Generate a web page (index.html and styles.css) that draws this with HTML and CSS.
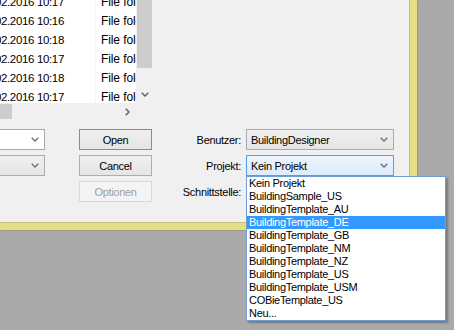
FILE: index.html
```html
<!DOCTYPE html>
<html lang="de">
<head>
    <meta charset="UTF-8">
    <title>Projekt öffnen</title>
    <link rel="stylesheet" href="styles.css">
</head>
<body>
    <div class="frame">
        <div class="dialog">
            <!-- file browser, cut off at the left/top edge -->
            <div class="browser">
                <div class="files">
                    <div class="rows">
                        <div class="row"><span class="date">03.02.2016 10:17</span><span class="type">File folder</span></div>
                        <div class="row"><span class="date">03.02.2016 10:16</span><span class="type">File folder</span></div>
                        <div class="row"><span class="date">03.02.2016 10:18</span><span class="type">File folder</span></div>
                        <div class="row"><span class="date">03.02.2016 10:17</span><span class="type">File folder</span></div>
                        <div class="row"><span class="date">03.02.2016 10:18</span><span class="type">File folder</span></div>
                        <div class="row"><span class="date">03.02.2016 10:17</span><span class="type">File folder</span></div>
                    </div>
                    <div class="vscroll">
                        <div class="vthumb"></div>
                        <div class="arrow-box">
                            <svg width="8" height="5" viewBox="0 0 8 5"><polyline points="0.7,0.7 4,4 7.3,0.7" fill="none" stroke="#606060" stroke-width="1.4"/></svg>
                        </div>
                    </div>
                </div>
                <div class="hscroll">
                    <div class="hthumb"></div>
                    <div class="arrow-box">
                        <svg width="5" height="8" viewBox="0 0 5 8"><polyline points="0.7,0.7 4,4 0.7,7.3" fill="none" stroke="#606060" stroke-width="1.4"/></svg>
                    </div>
                    <div class="corner"></div>
                </div>
            </div>

            <div class="controls">
                <div class="combo white left-combo">
                    <span class="value"></span>
                    <svg class="chev" width="8" height="5" viewBox="0 0 8 5"><polyline points="0.7,0.7 4,4 7.3,0.7" fill="none" stroke="#707070" stroke-width="1.4"/></svg>
                </div>
                <button class="btn default">Open</button>
                <span class="label">Benutzer:</span>
                <div class="combo">
                    <span class="value">BuildingDesigner</span>
                    <svg class="chev" width="8" height="5" viewBox="0 0 8 5"><polyline points="0.7,0.7 4,4 7.3,0.7" fill="none" stroke="#707070" stroke-width="1.4"/></svg>
                </div>

                <div class="combo left-combo">
                    <span class="value"></span>
                    <svg class="chev" width="8" height="5" viewBox="0 0 8 5"><polyline points="0.7,0.7 4,4 7.3,0.7" fill="none" stroke="#707070" stroke-width="1.4"/></svg>
                </div>
                <button class="btn">Cancel</button>
                <span class="label">Projekt:</span>
                <div class="combo open">
                    <span class="value">Kein Projekt</span>
                    <svg class="chev" width="8" height="5" viewBox="0 0 8 5"><polyline points="0.7,0.7 4,4 7.3,0.7" fill="none" stroke="#707070" stroke-width="1.4"/></svg>
                    <ul class="dropdown">
                        <li>Kein Projekt</li>
                        <li>BuildingSample_US</li>
                        <li>BuildingTemplate_AU</li>
                        <li class="selected">BuildingTemplate_DE</li>
                        <li>BuildingTemplate_GB</li>
                        <li>BuildingTemplate_NM</li>
                        <li>BuildingTemplate_NZ</li>
                        <li>BuildingTemplate_US</li>
                        <li>BuildingTemplate_USM</li>
                        <li>COBieTemplate_US</li>
                        <li>Neu...</li>
                    </ul>
                </div>

                <span></span>
                <button class="btn" disabled>Optionen</button>
                <span class="label">Schnittstelle:</span>
                <div class="combo"></div>
            </div>
        </div>
    </div>
</body>
</html>
```

FILE: styles.css
```css
body {
    margin: 0;
    width: 454px;
    height: 330px;
    overflow: hidden;
    background-color: #aaaaaa;
    font-family: 'Liberation Sans', Arial, sans-serif;
    font-size: 11px;
    letter-spacing: -0.3px;
    color: #000;
}

.frame {
    width: 410px;
    height: 223px;
    border-right: 7px solid #e3e083;
    border-bottom: 7px solid #e3e083;
    box-shadow: 1px 1px 0 #9c9b88;
}

.dialog {
    height: 222px;
    width: 409px;
    background-color: #f0f0f0;
    border-right: 1px solid #c4c078;
    border-bottom: 1px solid #c4c078;
}

/* file list */
.browser {
    width: 153px;
}

.files {
    display: flex;
    height: 103px;
    background-color: #fff;
}

.rows {
    width: 136px;
    flex-shrink: 0;
    overflow: hidden;
    font-size: 11.5px;
    letter-spacing: -0.35px;
}

.row {
    display: flex;
    height: 19px;
    line-height: 19px;
    white-space: nowrap;
}

.row:first-child {
    margin-top: -7px;
}

.date {
    flex-shrink: 0;
    width: 95px;
    overflow: hidden;
    text-indent: -20px;
    border-right: 1px solid #f4f7fb;
}

.type {
    flex-shrink: 0;
    padding-left: 5px;
    font-size: 12px;
    letter-spacing: -0.1px;
}

.vscroll {
    width: 17px;
    display: flex;
    flex-direction: column;
    background-color: #f0f0f0;
}

.vthumb {
    height: 68px;
    margin: 0 1px;
    background-color: #cdcdcd;
}

.arrow-box {
    width: 17px;
    height: 17px;
    display: flex;
    align-items: center;
    justify-content: center;
    margin-top: auto;
}

.hscroll {
    display: flex;
    height: 17px;
    background-color: #f0f0f0;
}

.hthumb {
    width: 12px;
    margin: 1px 0;
    background-color: #cdcdcd;
}

.hscroll .arrow-box {
    margin-left: auto;
}

.corner {
    width: 17px;
}

/* lower part */
.controls {
    display: grid;
    grid-template-columns: 79px 73px 94px 148px;
    grid-template-rows: 21px 21px 21px;
    row-gap: 5px;
    margin-top: 9px;
}

.combo {
    position: relative;
    display: flex;
    align-items: center;
    box-sizing: border-box;
    height: 21px;
    padding: 0 0 0 4px;
    border: 1px solid #acacac;
    background: linear-gradient(#f0f0f0, #e5e5e5);
}

.combo.white {
    background: #fff;
    border-color: #a9a9a9;
}

.combo.open {
    border-color: #569de5;
    background: linear-gradient(#ecf4fc, #dcecfc);
}

.left-combo {
    width: 65px;
    margin-left: -20px;
}

.value {
    flex: 1;
    white-space: nowrap;
}

.chev {
    margin-right: 5px;
}

.btn {
    height: 21px;
    padding: 0;
    font-family: inherit;
    font-size: 11px;
    letter-spacing: -0.3px;
    color: #000;
    border: 1px solid #adadad;
    background: linear-gradient(#f0f0f0, #e5e5e5);
}

.btn.default {
    border-color: #4a9ee0;
}

.btn:disabled {
    color: #a0a0a0;
    border-color: #d9d9d9;
    background: #f4f4f4;
}

.label {
    display: flex;
    align-items: center;
    justify-content: flex-end;
    padding-right: 5px;
    white-space: nowrap;
}

/* open list of the Projekt combo */
.dropdown {
    position: absolute;
    top: 20px;
    left: -1px;
    width: 198px;
    margin: 0;
    padding: 0;
    list-style: none;
    background-color: #fff;
    border: 1px solid #6d9fd6;
    box-shadow: 2px 2px 2px rgba(0, 0, 0, 0.3);
    z-index: 2;
}

.dropdown li {
    height: 13px;
    line-height: 13px;
    padding-left: 2px;
    white-space: nowrap;
}

.dropdown li.selected {
    background-color: #3399ff;
    color: #fff;
}
```
